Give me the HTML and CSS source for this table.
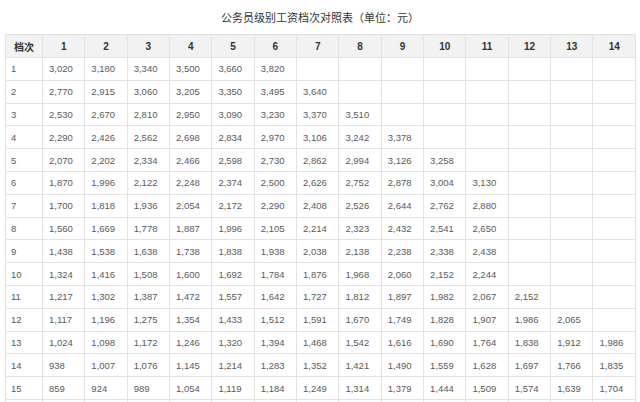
FILE: index.html
```html
<!DOCTYPE html>
<html lang="zh-CN">
<head>
<meta charset="utf-8">
<title>公务员级别工资档次对照表</title>
<link rel="stylesheet" href="styles.css">
</head>
<body>
<div class="page">
  <div class="title">公务员级别工资档次对照表（单位：元）</div>
  <table class="grid">
    <colgroup>
      <col class="c0"><col><col><col><col><col><col><col><col><col><col><col><col><col><col>
    </colgroup>
    <thead>
      <tr><th>档次</th><th>1</th><th>2</th><th>3</th><th>4</th><th>5</th><th>6</th><th>7</th><th>8</th><th>9</th><th>10</th><th>11</th><th>12</th><th>13</th><th>14</th></tr>
    </thead>
    <tbody>
      <tr><td>1</td><td>3,020</td><td>3,180</td><td>3,340</td><td>3,500</td><td>3,660</td><td>3,820</td><td></td><td></td><td></td><td></td><td></td><td></td><td></td><td></td></tr>
      <tr><td>2</td><td>2,770</td><td>2,915</td><td>3,060</td><td>3,205</td><td>3,350</td><td>3,495</td><td>3,640</td><td></td><td></td><td></td><td></td><td></td><td></td><td></td></tr>
      <tr><td>3</td><td>2,530</td><td>2,670</td><td>2,810</td><td>2,950</td><td>3,090</td><td>3,230</td><td>3,370</td><td>3,510</td><td></td><td></td><td></td><td></td><td></td><td></td></tr>
      <tr><td>4</td><td>2,290</td><td>2,426</td><td>2,562</td><td>2,698</td><td>2,834</td><td>2,970</td><td>3,106</td><td>3,242</td><td>3,378</td><td></td><td></td><td></td><td></td><td></td></tr>
      <tr><td>5</td><td>2,070</td><td>2,202</td><td>2,334</td><td>2,466</td><td>2,598</td><td>2,730</td><td>2,862</td><td>2,994</td><td>3,126</td><td>3,258</td><td></td><td></td><td></td><td></td></tr>
      <tr><td>6</td><td>1,870</td><td>1,996</td><td>2,122</td><td>2,248</td><td>2,374</td><td>2,500</td><td>2,626</td><td>2,752</td><td>2,878</td><td>3,004</td><td>3,130</td><td></td><td></td><td></td></tr>
      <tr><td>7</td><td>1,700</td><td>1,818</td><td>1,936</td><td>2,054</td><td>2,172</td><td>2,290</td><td>2,408</td><td>2,526</td><td>2,644</td><td>2,762</td><td>2,880</td><td></td><td></td><td></td></tr>
      <tr><td>8</td><td>1,560</td><td>1,669</td><td>1,778</td><td>1,887</td><td>1,996</td><td>2,105</td><td>2,214</td><td>2,323</td><td>2,432</td><td>2,541</td><td>2,650</td><td></td><td></td><td></td></tr>
      <tr><td>9</td><td>1,438</td><td>1,538</td><td>1,638</td><td>1,738</td><td>1,838</td><td>1,938</td><td>2,038</td><td>2,138</td><td>2,238</td><td>2,338</td><td>2,438</td><td></td><td></td><td></td></tr>
      <tr><td>10</td><td>1,324</td><td>1,416</td><td>1,508</td><td>1,600</td><td>1,692</td><td>1,784</td><td>1,876</td><td>1,968</td><td>2,060</td><td>2,152</td><td>2,244</td><td></td><td></td><td></td></tr>
      <tr><td>11</td><td>1,217</td><td>1,302</td><td>1,387</td><td>1,472</td><td>1,557</td><td>1,642</td><td>1,727</td><td>1,812</td><td>1,897</td><td>1,982</td><td>2,067</td><td>2,152</td><td></td><td></td></tr>
      <tr><td>12</td><td>1,117</td><td>1,196</td><td>1,275</td><td>1,354</td><td>1,433</td><td>1,512</td><td>1,591</td><td>1,670</td><td>1,749</td><td>1,828</td><td>1,907</td><td>1,986</td><td>2,065</td><td></td></tr>
      <tr><td>13</td><td>1,024</td><td>1,098</td><td>1,172</td><td>1,246</td><td>1,320</td><td>1,394</td><td>1,468</td><td>1,542</td><td>1,616</td><td>1,690</td><td>1,764</td><td>1,838</td><td>1,912</td><td>1,986</td></tr>
      <tr><td>14</td><td>938</td><td>1,007</td><td>1,076</td><td>1,145</td><td>1,214</td><td>1,283</td><td>1,352</td><td>1,421</td><td>1,490</td><td>1,559</td><td>1,628</td><td>1,697</td><td>1,766</td><td>1,835</td></tr>
      <tr><td>15</td><td>859</td><td>924</td><td>989</td><td>1,054</td><td>1,119</td><td>1,184</td><td>1,249</td><td>1,314</td><td>1,379</td><td>1,444</td><td>1,509</td><td>1,574</td><td>1,639</td><td>1,704</td></tr>
      <tr><td></td><td></td><td></td><td></td><td></td><td></td><td></td><td></td><td></td><td></td><td></td><td></td><td></td><td></td><td></td></tr>
    </tbody>
  </table>
</div>
</body>
</html>
```

FILE: styles.css
```css
html, body {
  margin: 0;
  padding: 0;
  background: #ffffff;
}

.page {
  width: 640px;
  height: 402px;
  overflow: hidden;
  font-family: "Liberation Sans", Arial, "Noto Sans CJK SC", sans-serif;
}

.title {
  height: 34px;
  line-height: 35px;
  text-align: center;
  font-family: "Noto Sans CJK SC", sans-serif;
  font-size: 11px;
  color: #333333;
}

.grid {
  margin-left: 5px;
  width: 631px;
  table-layout: fixed;
  border-collapse: collapse;
}

.grid .c0 {
  width: 37px;
}

.grid th,
.grid td {
  border: 1px solid #e2e2e2;
  padding: 0 0 0 6px;
  overflow: hidden;
  white-space: nowrap;
}

.grid th {
  height: 22px;
  background: #f2f2f2;
  color: #333333;
  font-size: 10px;
  font-weight: bold;
  text-align: center;
  padding: 0;
}

.grid th:first-child {
  font-family: "Noto Sans CJK SC", sans-serif;
  font-size: 10px;
}

.grid td {
  height: 21.8px;
  color: #5a5a5a;
  font-size: 9.5px;
  text-align: left;
}

.grid td:first-child {
  padding-left: 5px;
}
```
